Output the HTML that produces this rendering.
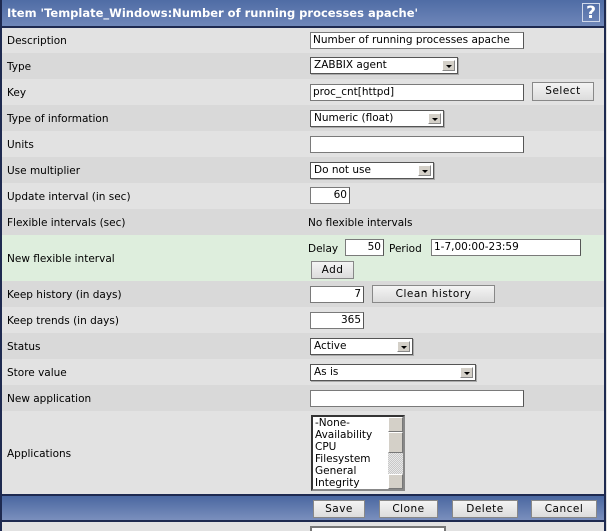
<!DOCTYPE html>
<html><head><meta charset="utf-8"><style>
*{margin:0;padding:0;box-sizing:border-box}
html,body{width:607px;height:531px;overflow:hidden}
body{background:#dedede;font-family:"DejaVu Sans","Liberation Sans",sans-serif;font-size:10.5px;color:#000;position:relative}
.a{position:absolute}
.frame{left:0;top:0;width:606px;height:531px;border-left:2px solid #1e2a50;border-right:2px solid #1e2a50}
.hdr{left:0;top:0;width:606px;height:28px;background:linear-gradient(#4f6ca5,#6f87b9);border-bottom:2px solid #1e2a50;color:#fff;font-weight:bold;font-size:11.5px;padding:6px 0 0 7px}
.row{left:2px;width:602px;height:26px}
.d{background:#d9d9d9}.l{background:#e2e2e2}.g{background:#deeedd}
.lbl{left:7px;font-size:10.5px}
.in{background:#fff;border:1px solid #7a7a7a;border-right-color:#555;height:17px;padding:1px 2px;font-size:10.5px;white-space:nowrap;overflow:hidden}
.r{text-align:right}
.sel{background:#fff;border:1px solid #555;box-shadow:1px 1px 0 #aaa;height:17px;padding:0 3px;font-size:10.5px;line-height:15px}
.sel i{position:absolute;right:2px;top:2px;width:13px;height:11px;background:#d4d0c8;border:1px solid #888;border-top-color:#fff;border-left-color:#fff}
.sel i:after{content:"";position:absolute;left:3px;top:4px;border:3px solid transparent;border-top:3px solid #000;border-bottom:0}
.btn{background:linear-gradient(#f4f4f4,#dcdcdc);border:1px solid #888;text-align:center;font-size:10.5px;line-height:16px;letter-spacing:.5px}
.ftr{left:2px;top:494px;width:602px;height:28px;background:linear-gradient(#4a67a0,#7a8fbd);border-top:2px solid #1e2a50;border-bottom:2px solid #1e2a50}
</style></head><body>
<div class="a hdr">Item 'Template_Windows:Number of running processes apache'</div>
<div class="a" style="left:582px;top:3px;width:18px;height:19px;border:1px solid #cfd8ea;color:#fff;font-weight:bold;font-size:17px;text-align:center;line-height:18px">?</div>

<div class="a row l" style="top:28px;height:25px"></div>
<div class="a row d" style="top:53px"></div>
<div class="a row l" style="top:79px"></div>
<div class="a row d" style="top:105px"></div>
<div class="a row l" style="top:131px"></div>
<div class="a row d" style="top:157px"></div>
<div class="a row l" style="top:183px"></div>
<div class="a row d" style="top:209px"></div>
<div class="a row g" style="top:235px;height:46px"></div>
<div class="a row d" style="top:281px"></div>
<div class="a row l" style="top:307px"></div>
<div class="a row d" style="top:333px"></div>
<div class="a row l" style="top:359px"></div>
<div class="a row d" style="top:385px"></div>
<div class="a row l" style="top:411px;height:83px"></div>
<div class="a row l" style="top:522px;height:9px"></div>

<div class="a lbl" style="top:35px">Description</div>
<div class="a lbl" style="top:61px">Type</div>
<div class="a lbl" style="top:87px">Key</div>
<div class="a lbl" style="top:113px">Type of information</div>
<div class="a lbl" style="top:139px">Units</div>
<div class="a lbl" style="top:165px">Use multiplier</div>
<div class="a lbl" style="top:191px">Update interval (in sec)</div>
<div class="a lbl" style="top:217px">Flexible intervals (sec)</div>
<div class="a lbl" style="top:253px">New flexible interval</div>
<div class="a lbl" style="top:289px">Keep history (in days)</div>
<div class="a lbl" style="top:315px">Keep trends (in days)</div>
<div class="a lbl" style="top:341px">Status</div>
<div class="a lbl" style="top:367px">Store value</div>
<div class="a lbl" style="top:393px">New application</div>
<div class="a lbl" style="top:448px">Applications</div>

<div class="a in" style="left:310px;top:32px;width:214px">Number of running processes apache</div>
<div class="a sel" style="left:310px;top:57px;width:148px">ZABBIX agent<i></i></div>
<div class="a in" style="left:310px;top:84px;width:214px">proc_cnt[httpd]</div>
<div class="a btn" style="left:532px;top:82px;width:62px;height:19px">Select</div>
<div class="a sel" style="left:310px;top:110px;width:134px">Numeric (float)<i></i></div>
<div class="a in" style="left:310px;top:136px;width:214px"></div>
<div class="a sel" style="left:310px;top:162px;width:124px">Do not use<i></i></div>
<div class="a in r" style="left:310px;top:187px;width:40px">60</div>
<div class="a" style="left:308px;top:217px">No flexible intervals</div>
<div class="a" style="left:308px;top:243px">Delay</div>
<div class="a in r" style="left:345px;top:239px;width:39px">50</div>
<div class="a" style="left:389px;top:243px">Period</div>
<div class="a in" style="left:431px;top:239px;width:150px">1-7,00:00-23:59</div>
<div class="a btn" style="left:311px;top:261px;width:43px;height:18px">Add</div>
<div class="a in r" style="left:310px;top:286px;width:54px">7</div>
<div class="a btn" style="left:372px;top:285px;width:123px;height:18px">Clean history</div>
<div class="a in r" style="left:310px;top:312px;width:54px">365</div>
<div class="a sel" style="left:310px;top:338px;width:103px">Active<i></i></div>
<div class="a sel" style="left:310px;top:364px;width:166px">As is<i></i></div>
<div class="a in" style="left:310px;top:390px;width:214px"></div>
<div class="a" style="left:311px;top:415px;width:94px;height:76px;background:#fff;border:2px inset #888;font-size:10.5px;line-height:12px;padding:0 2px">-None-<br>Availability<br>CPU<br>Filesystem<br>General<br>Integrity
<div class="a" style="right:0;top:0;width:15px;height:72px;background:repeating-conic-gradient(#e8e8e8 0 25%,#c8c8c8 0 50%) 0 0/2px 2px"></div>
<div class="a" style="right:0;top:0;width:15px;height:15px;background:#d4d0c8;border:1px solid #777;border-top-color:#fff;border-left-color:#fff"></div>
<div class="a" style="right:0;top:15px;width:15px;height:21px;background:#d4d0c8;border:1px solid #777;border-top-color:#fff;border-left-color:#fff"></div>
<div class="a" style="right:0;top:57px;width:15px;height:15px;background:#d4d0c8;border:1px solid #777;border-top-color:#fff;border-left-color:#fff"></div>
</div>
<div class="a ftr"></div>
<div class="a btn" style="left:313px;top:500px;width:52px;height:18px">Save</div>
<div class="a btn" style="left:379px;top:500px;width:59px;height:18px">Clone</div>
<div class="a btn" style="left:452px;top:500px;width:66px;height:18px">Delete</div>
<div class="a btn" style="left:531px;top:500px;width:66px;height:18px">Cancel</div>
<div class="a" style="left:310px;top:526px;width:136px;height:5px;background:#fff;border:2px solid #777;border-bottom:0"></div>
<div class="a frame"></div>
</body></html>
